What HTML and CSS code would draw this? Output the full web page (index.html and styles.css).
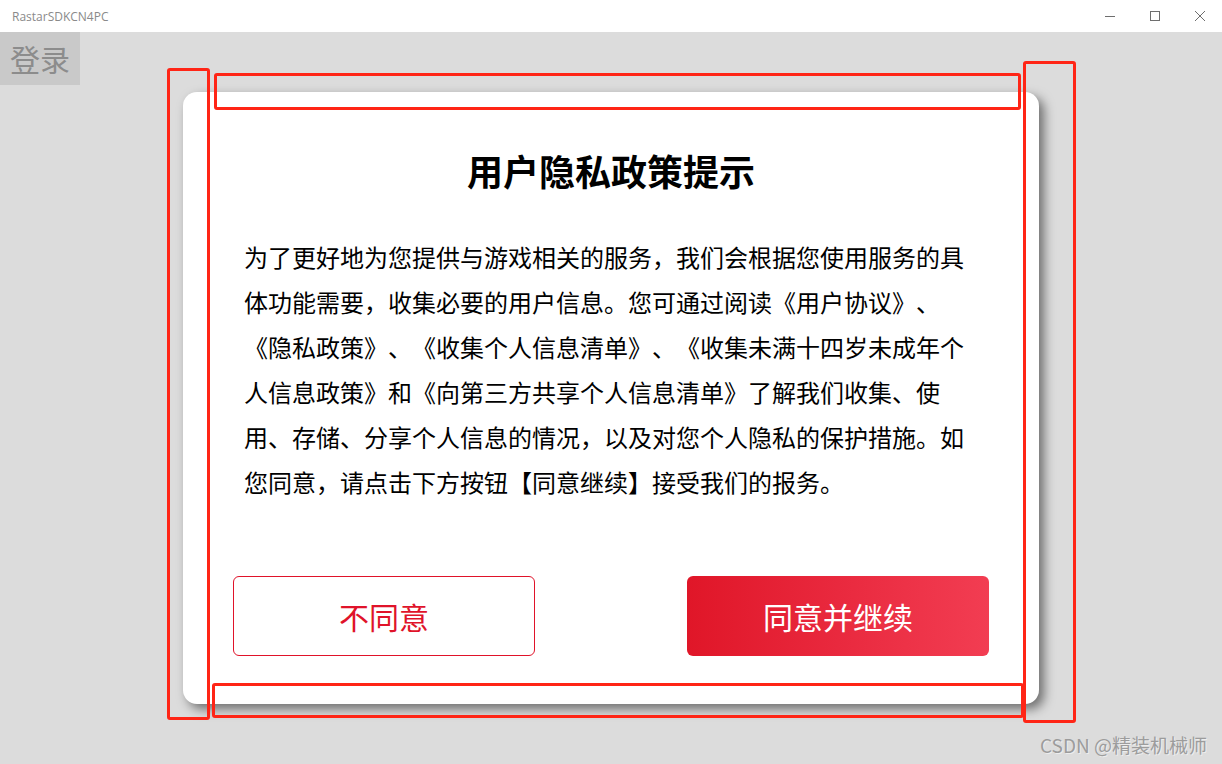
FILE: index.html
```html
<!DOCTYPE html>
<html lang="zh-CN">
<head>
<meta charset="utf-8">
<title>RastarSDKCN4PC</title>
<link rel="stylesheet" href="styles.css">
</head>
<body>
<div class="window">
  <header class="titlebar">
    <span class="app-name">RastarSDKCN4PC</span>
    <div class="controls">
      <span class="ctl"><svg width="12" height="12" viewBox="0 0 12 12"><path d="M1 6.5H11" stroke="#6e6e6e" stroke-width="1"/></svg></span>
      <span class="ctl"><svg width="12" height="12" viewBox="0 0 12 12"><rect x="1.5" y="1.5" width="9" height="9" fill="none" stroke="#6e6e6e" stroke-width="1"/></svg></span>
      <span class="ctl"><svg width="12" height="12" viewBox="0 0 12 12"><path d="M1 1L11 11M11 1L1 11" stroke="#6e6e6e" stroke-width="1"/></svg></span>
    </div>
  </header>
  <main class="stage">
    <div class="login">登录</div>
    <section class="card">
      <h1 class="title">用户隐私政策提示</h1>
      <p class="body">为了更好地为您提供与游戏相关的服务，我们会根据您使用服务的具体功能需要，收集必要的用户信息。您可通过阅读《用户协议》、《隐私政策》、《收集个人信息清单》、《收集未满十四岁未成年个人信息政策》和《向第三方共享个人信息清单》了解我们收集、使用、存储、分享个人信息的情况，以及对您个人隐私的保护措施。如您同意，请点击下方按钮【同意继续】接受我们的报务。</p>
      <div class="actions">
        <button class="btn btn-ghost">不同意</button>
        <button class="btn btn-primary">同意并继续</button>
      </div>
    </section>
    <div class="watermark">CSDN @精装机械师</div>
  </main>
  <div class="mark mark-left"></div>
  <div class="mark mark-top"></div>
  <div class="mark mark-right"></div>
  <div class="mark mark-bottom"></div>
</div>
</body>
</html>
```
FILE: styles.css
```css
* { box-sizing: border-box; }
html, body { margin: 0; padding: 0; }
body {
  width: 1222px;
  height: 764px;
  overflow: hidden;
  font-family: "Noto Sans CJK SC", "Noto Sans", sans-serif;
  background: #dcdcdc;
  text-spacing-trim: space-all;
}
.window {
  position: relative;
  width: 1222px;
  height: 764px;
  display: flex;
  flex-direction: column;
}
.titlebar {
  height: 32px;
  background: #ffffff;
  display: flex;
  align-items: center;
  justify-content: space-between;
  padding-left: 12px;
}
.app-name {
  font-family: "Open Sans", "Noto Sans", sans-serif;
  font-size: 12px;
  color: #8a8a8a;
}
.controls { display: flex; height: 32px; }
.ctl {
  width: 45px;
  height: 32px;
  display: flex;
  align-items: center;
  justify-content: center;
}
.stage {
  position: relative;
  flex: 1;
  background: #dcdcdc;
  display: flex;
  align-items: center;
  justify-content: center;
}
.login {
  position: absolute;
  left: 0;
  top: 0;
  width: 80px;
  height: 53px;
  background: #c9c9c9;
  color: #8c8c8c;
  font-size: 30px;
  line-height: 53px;
  text-align: center;
}
.card {
  width: 856px;
  height: 612px;
  background: #ffffff;
  border-radius: 14px;
  box-shadow: 5px 5px 11px rgba(0, 0, 0, 0.5);
  padding: 56px 50px 48px;
  display: flex;
  flex-direction: column;
}
.title {
  margin: 0;
  height: 44px;
  font-size: 36px;
  line-height: 44px;
  font-weight: 700;
  text-align: center;
  color: #000;
}
.body {
  margin: 42px 11px 0;
  height: 270px;
  font-size: 24px;
  line-height: 45px;
  color: #000;
  text-spacing-trim: space-all;
}
.actions {
  margin-top: 72px;
  display: flex;
  justify-content: space-between;
}
.btn {
  width: 302px;
  height: 80px;
  border-radius: 6px;
  font-family: "Noto Sans CJK SC", "Noto Sans", sans-serif;
  font-size: 30px;
  padding: 0;
  cursor: pointer;
}
.btn-ghost {
  background: #fff;
  color: #e0132a;
  border: 1px solid #e0132a;
}
.btn-primary {
  border: none;
  color: #fff;
  background: linear-gradient(90deg, #e01628 0%, #e9293e 50%, #f23d52 100%);
}
.watermark {
  position: absolute;
  right: 15px;
  bottom: 6px;
  font-size: 19px;
  color: #9c9c9c;
  text-shadow: 1px 1px 0 rgba(255,255,255,0.5);
}
.mark {
  position: absolute;
  border: 3px solid #ff2516;
  border-radius: 3px;
}
.mark-left { left: 167px; top: 68px; width: 43px; height: 652px; }
.mark-top { left: 214px; top: 73px; width: 807px; height: 37px; }
.mark-right { left: 1023px; top: 61px; width: 53px; height: 662px; }
.mark-bottom { left: 212px; top: 683px; width: 812px; height: 35px; }
```
